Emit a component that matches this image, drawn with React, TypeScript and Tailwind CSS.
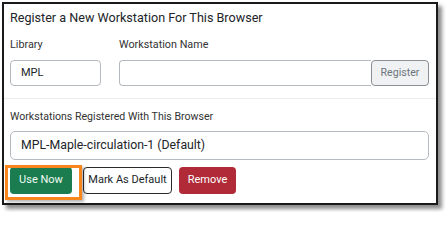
import React from "react";

export default function App() {
  return (
    <div
      className="w-[446px] h-[212px] bg-white overflow-hidden pt-[2px] pl-[2px]"
      style={{ fontFamily: 'Roboto, "Open Sans", sans-serif' }}
    >
      <div className="relative w-[436px] h-[203px] border-2 border-[#1a1a1a] bg-white shadow-[4px_4px_4px_rgba(0,0,0,0.45)] text-[#212529]">
        <div className="pl-[6px] pr-[7px] pt-[3px]">
          <div className="h-[22px] flex items-center text-[12.6px] whitespace-nowrap">
            Register a New Workstation For This Browser
          </div>
          <div className="flex gap-[18px] mt-[8px]">
            <div className="w-[91px] flex flex-col">
              <div className="h-[16px] flex items-center text-[10.8px] text-[#333]">Library</div>
              <div className="mt-[7px] h-[26px] rounded-[4px] border border-[#b5bac0] flex items-center pl-[10px] text-[11px]">
                MPL
              </div>
            </div>
            <div className="flex-1 flex flex-col">
              <div className="h-[16px] flex items-center text-[10.8px] text-[#333]">Workstation Name</div>
              <div className="mt-[7px] h-[26px] flex">
                <div className="flex-1 rounded-l-[4px] border border-[#b5bac0] border-r-0" />
                <div className="w-[58px] rounded-[4px] border border-[#8a8f95] bg-[#f0f1f2] flex items-center justify-center text-[10.6px] text-[#6c757d]">
                  Register
                </div>
              </div>
            </div>
          </div>
        </div>
        <div className="mt-[12px] border-t border-[#ececec]" />
        <div className="pl-[6px] pr-[7px]">
          <div className="mt-[10px] h-[16px] flex items-center text-[10.6px] text-[#333] whitespace-nowrap">
            Workstations Registered With This Browser
          </div>
          <div className="mt-[6px] h-[29px] rounded-[5px] border border-[#b5bac0] flex items-center pl-[10px] text-[12.3px] whitespace-nowrap">
            MPL-Maple-circulation-1 (Default)
          </div>
          <div className="mt-[7px] flex h-[27px]">
            <div className="w-[62px] rounded-[4px] bg-[#1b7d4f] text-[#f4fbf6] flex items-center justify-center text-[11px] whitespace-nowrap">
              Use Now
            </div>
            <div className="ml-[11px] w-[89px] rounded-[4px] border border-[#2a2a2a] bg-white flex items-center justify-center text-[11px] whitespace-nowrap">
              Mark As Default
            </div>
            <div className="ml-[7px] w-[57px] rounded-[4px] bg-[#b02a37] text-white flex items-center justify-center text-[11px] whitespace-nowrap">
              Remove
            </div>
          </div>
        </div>
        <div className="absolute left-[1px] top-[161px] w-[77px] h-[35px] border-[3px] border-[#f7861c] shadow-[2px_2px_3px_rgba(0,0,0,0.3)]" />
      </div>
    </div>
  );
}
